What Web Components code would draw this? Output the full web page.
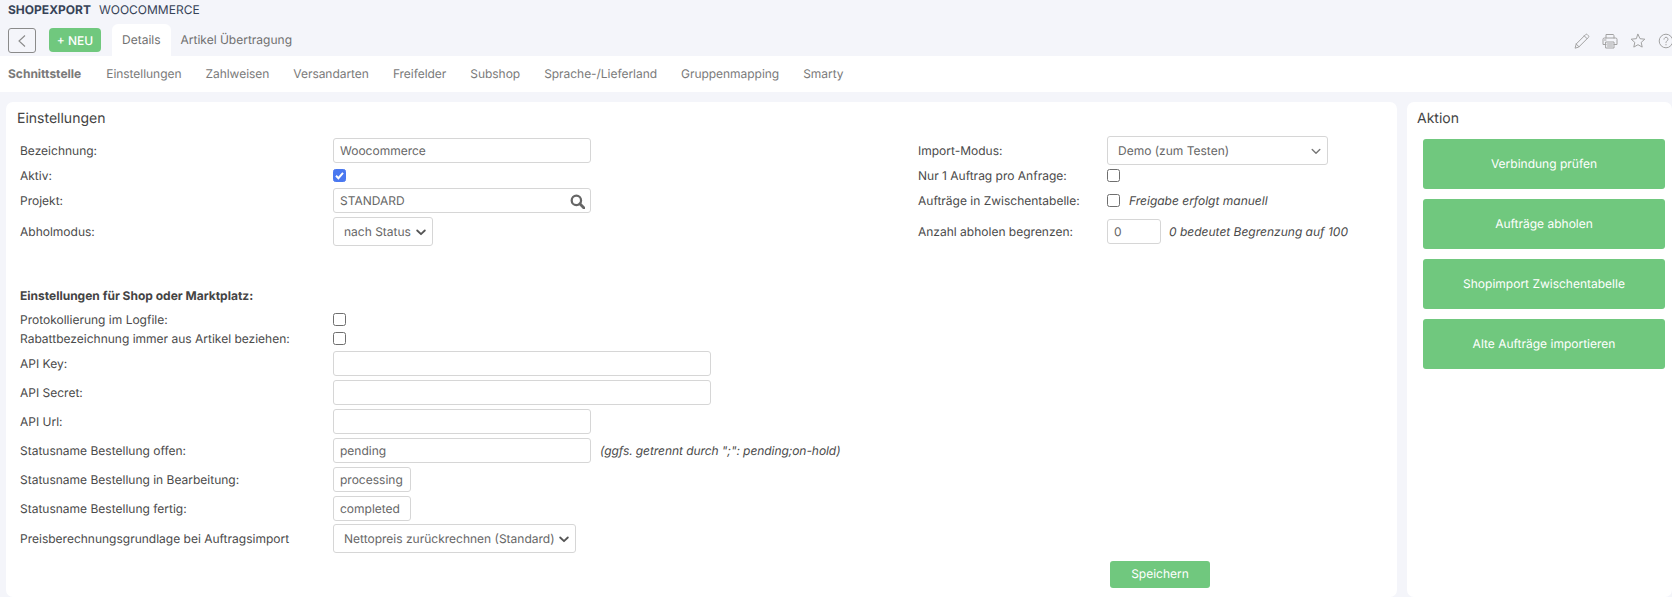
<!DOCTYPE html>
<html lang="de">
<head>
<meta charset="utf-8">
<title>Shopexport Woocommerce</title>
<style>
  html, body { margin: 0; height: 597px; overflow: hidden; background: #f4f5fa; }
  body { font: 12px/1.2 Inter, "Liberation Sans", sans-serif; color: #4a4a4a; text-rendering: geometricPrecision; }
  b { font-weight: 700; }
</style>
</head>
<body>
<shop-header>
  <span slot="title">SHOPEXPORT</span>
  <span slot="subtitle">WOOCOMMERCE</span>
  <shop-tab slot="tabs" active>Details</shop-tab>
  <shop-tab slot="tabs">Artikel Übertragung</shop-tab>
</shop-header>

<shop-subnav>
  <a class="on">Schnittstelle</a>
  <a>Einstellungen</a>
  <a>Zahlweisen</a>
  <a>Versandarten</a>
  <a>Freifelder</a>
  <a>Subshop</a>
  <a>Sprache-/Lieferland</a>
  <a>Gruppenmapping</a>
  <a>Smarty</a>
</shop-subnav>

<shop-main>
  <shop-panel heading="Einstellungen" style="width:1391px;--title-x:11px">
    <form-columns>
      <form-col style="width:898px">
        <form-row label="Bezeichnung:" h="29"><text-field w="258">Woocommerce</text-field></form-row>
        <form-row label="Aktiv:" h="21"><check-box checked></check-box></form-row>
        <form-row label="Projekt:" h="29"><text-field w="258" search>STANDARD</text-field></form-row>
        <form-row label="Abholmodus:" h="33"><select-field w="100">nach Status</select-field></form-row>
      </form-col>
      <form-col style="--label-w:189px">
        <form-row label="Import-Modus:" h="29"><select-field w="221" wide>Demo (zum Testen)</select-field></form-row>
        <form-row label="Nur 1 Auftrag pro Anfrage:" h="21"><check-box></check-box></form-row>
        <form-row label="Aufträge in Zwischentabelle:" h="29"><check-box></check-box><i-note style="margin-left:9px">Freigabe erfolgt manuell</i-note></form-row>
        <form-row label="Anzahl abholen begrenzen:" h="33"><text-field w="54">0</text-field><i-note style="margin-left:8px">0 bedeutet Begrenzung auf 100</i-note></form-row>
      </form-col>
    </form-columns>

    <form-col style="margin-top:35px">
      <form-row h="24" style="margin-bottom:2px"><b slot="label">Einstellungen für Shop oder Marktplatz:</b></form-row>
      <form-row label="Protokollierung im Logfile:" h="20"><check-box></check-box></form-row>
      <form-row label="Rabattbezeichnung immer aus Artikel beziehen:" h="19" style="margin-bottom:1px"><check-box></check-box></form-row>
      <form-row label="API Key:" h="29"><text-field w="378"></text-field></form-row>
      <form-row label="API Secret:" h="29"><text-field w="378"></text-field></form-row>
      <form-row label="API Url:" h="29"><text-field w="258"></text-field></form-row>
      <form-row label="Statusname Bestellung offen:" h="29"><text-field w="258">pending</text-field><i-note style="margin-left:9px;letter-spacing:-.07px">(ggfs. getrennt durch ";": pending;on-hold)</i-note></form-row>
      <form-row label="Statusname Bestellung in Bearbeitung:" h="29"><text-field w="78">processing</text-field></form-row>
      <form-row label="Statusname Bestellung fertig:" h="29"><text-field w="78">completed</text-field></form-row>
      <form-row label="Preisberechnungsgrundlage bei Auftragsimport" h="31"><select-field w="243">Nettopreis zurückrechnen (Standard)</select-field></form-row>
    </form-col>

    <form-footer><action-button small>Speichern</action-button></form-footer>
  </shop-panel>

  <shop-panel heading="Aktion" style="flex:1" actions>
    <action-button>Verbindung prüfen</action-button>
    <action-button>Aufträge abholen</action-button>
    <action-button>Shopimport Zwischentabelle</action-button>
    <action-button>Alte Aufträge importieren</action-button>
  </shop-panel>
</shop-main>

<script>
  // small helper so every component only has to state its markup
  function component(name, html, extra) {
    const template = document.createElement("template");
    template.innerHTML = html;
    class Comp extends HTMLElement {
      constructor() {
        super();
        this.attachShadow({ mode: "open" });
        this.shadowRoot.appendChild(template.content.cloneNode(true));
      }
      connectedCallback() {
        if (extra) extra(this, this.shadowRoot);
      }
    }
    customElements.define(name, Comp);
  }

  component("shop-header", `
  <style>
    :host { display: block; height: 56px; position: relative; overflow: hidden; }
    .title { display: flex; gap: 8px; height: 24px; padding: 3px 0 0 8px; box-sizing: border-box; font-size: 12px; line-height: 14px; color: #374357; }
    .title b { font-weight: 700; }
    .bar { display: flex; align-items: flex-start; height: 32px; padding-left: 8px; }
    .back { width: 28px; height: 25px; margin-top: 4px; box-sizing: border-box; border: 1px solid #8b8b8b; border-radius: 3px; display: flex; align-items: center; justify-content: center; }
    .new { width: 52px; height: 24px; margin: 4px 11px 0 13px; border-radius: 4px; background: #70c87e; color: #fff; font-size: 12px; font-weight: 500; line-height: 25px; text-align: center; }
    .tabs { display: flex; }
    .icons { margin-left: auto; display: flex; gap: 12px; margin-top: 9px; margin-right: -2px; color: #a2a2a2; }
    .icons svg { display: block; width: 16px; height: 16px; fill: none; stroke: currentColor; stroke-width: 1; stroke-linejoin: round; stroke-linecap: round; }
  </style>
  <div class="title"><b><slot name="title"></slot></b><span><slot name="subtitle"></slot></span></div>
  <div class="bar">
    <div class="back"><svg width="10" height="14" viewBox="0 0 10 14" fill="none" stroke="#8a8a8a" stroke-width="1.1"><path d="M8 1.5 2 7l6 5.5"/></svg></div>
    <div class="new">+ NEU</div>
    <div class="tabs"><slot name="tabs"></slot></div>
    <div class="icons">
      <svg viewBox="0 0 16 16"><path d="M1.200 14.800 2.200 11 11.600 1.600a1.200 1.200 0 0 1 1.700 0l1.100 1.100a1.200 1.200 0 0 1 0 1.700L5 13.800zM2.200 11 5 13.800M10.300 2.900l2.800 2.800"/></svg>
      <svg viewBox="0 0 16 16"><path d="M4 5V1.500h7.200L12 2.300V5M4 11.500H1V6.400A1.400 1.400 0 0 1 2.400 5h11.200A1.400 1.400 0 0 1 15 6.400v5.100h-3M4 9h8v6H4zM5.500 11h5M5.500 13h5M2.500 7h1.500"/></svg>
      <svg viewBox="0 0 16 16"><path d="M8 1.300l2 4.400 4.800.5-3.600 3.200 1 4.700L8 11.700l-4.200 2.400 1-4.700L1.200 6.200 6 5.700z"/></svg>
      <svg viewBox="0 0 16 16"><circle cx="8" cy="8" r="6.800"/><path d="M6 6.200a2 2 0 1 1 3.100 1.700C8.300 8.400 8 8.800 8 9.700M8 11.500v.4"/></svg>
    </div>
  </div>`);

  component("shop-tab", `
  <style>
    :host { display: block; height: 32px; padding: 0 10px; font-size: 12px; line-height: 31px; color: #707070; border-radius: 6px 6px 0 0; }
    :host([active]) { background: #fff; }
  </style>
  <slot></slot>`);

  component("shop-subnav", `
  <style>
    :host { display: flex; gap: 24px; height: 36px; padding: 1px 0 0 8px; box-sizing: border-box; align-items: center; background: #fff; font-size: 12px; color: #7a7a7a; letter-spacing: -.04px; }
    ::slotted(.on) { font-weight: 700; color: #7a7a7a; margin-right: 1px; letter-spacing: 0; }
  </style>
  <slot></slot>`);

  component("shop-main", `
  <style>
    :host { display: flex; gap: 10px; height: 505px; padding: 10px 0 0 6px; box-sizing: border-box; }
  </style>
  <slot></slot>`);

  component("shop-panel", `
  <style>
    :host { display: block; height: 495px; box-sizing: border-box; background: #fff; border-radius: 7px; }
    h2 { margin: 0; height: 34px; padding: 8px 0 0 var(--title-x, 10px); box-sizing: border-box; font-size: 14px; line-height: 17px; font-weight: 400; color: #444; }
    .body { padding: 0 0 0 14px; }
    :host([actions]) .body { padding: 3px 7px 0 16px; display: flex; flex-direction: column; gap: 10px; }
  </style>
  <h2></h2>
  <div class="body"><slot></slot></div>`, (el, root) => {
    root.querySelector("h2").textContent = el.getAttribute("heading");
  });

  component("form-columns", `
  <style>:host { display: flex; }</style>
  <slot></slot>`);

  component("form-col", `
  <style>:host { display: block; }</style>
  <slot></slot>`);

  component("form-row", `
  <style>
    :host { display: flex; align-items: center; font-size: 12px; color: #4a4a4a; }
    .label { flex: none; width: var(--label-w, 313px); padding-top: 2px; }
    ::slotted(b) { font-weight: 700; color: #444; white-space: nowrap; }
    .ctl { display: flex; align-items: center; }
  </style>
  <div class="label"><span></span><slot name="label"></slot></div>
  <div class="ctl"><slot></slot></div>`, (el, root) => {
    root.querySelector("span").textContent = el.getAttribute("label") || "";
    el.style.height = el.getAttribute("h") + "px";
  });

  component("text-field", `
  <style>
    :host { display: flex; align-items: center; justify-content: space-between; height: 25px; padding: 1px 5px 0 6px; box-sizing: border-box; border: 1px solid #d6d6d6; border-radius: 3px; font-size: 12px; color: #666; background: #fff; white-space: nowrap; }
    svg { display: none; width: 15px; height: 15px; fill: none; stroke: #666; stroke-width: 2.4; }
    :host([search]) svg { display: block; }
  </style>
  <span><slot></slot></span>
  <svg viewBox="0 0 16 16"><circle cx="6.800" cy="6.800" r="5"/><path d="M10.500 10.500 15 15" stroke-width="3" stroke-linecap="round"/></svg>`, (el) => {
    el.style.width = el.getAttribute("w") + "px";
  });

  component("select-field", `
  <style>
    :host { display: flex; align-items: center; justify-content: space-between; height: 29px; padding: 1px 6px 0 10px; box-sizing: border-box; border: 1px solid #d6d6d6; border-radius: 3px; font-size: 12px; color: #666; background: #fff; white-space: nowrap; }
    svg { width: 10px; height: 7px; fill: none; stroke: #555; stroke-width: 1.8; stroke-linecap: round; stroke-linejoin: round; }
    :host([wide]) svg { stroke: #777; stroke-width: 1.400; }
  </style>
  <span><slot></slot></span>
  <svg viewBox="0 0 10 7"><path d="M1.200 1.500 5 5.200 8.800 1.500"/></svg>`, (el) => {
    el.style.width = el.getAttribute("w") + "px";
  });

  component("check-box", `
  <style>
    :host { display: block; width: 13px; height: 13px; box-sizing: border-box; border: 1px solid #6f6f6f; border-radius: 2.500px; background: #fff; }
    :host([checked]) { background: #4a78f0; border-color: #4a78f0; }
    svg { display: none; width: 11px; height: 11px; fill: none; stroke: #fff; stroke-width: 2; }
    :host([checked]) svg { display: block; }
  </style>
  <svg viewBox="0 0 11 11"><path d="M2 5.800 4.400 8.200 9 2.800"/></svg>`);

  component("i-note", `
  <style>:host { display: block; padding-top: 2px; font-style: italic; color: #4a4a4a; white-space: nowrap; }</style>
  <slot></slot>`);

  component("form-footer", `
  <style>:host { display: flex; justify-content: flex-end; padding: 7px 187px 0 0; }</style>
  <slot></slot>`);

  component("action-button", `
  <style>
    :host { display: flex; align-items: center; justify-content: center; height: 50px; border-radius: 3px; background: #70c87e; color: #fff; font-size: 12px; }
    :host([small]) { width: 100px; height: 27px; }
  </style>
  <slot></slot>`);
</script>
</body>
</html>
